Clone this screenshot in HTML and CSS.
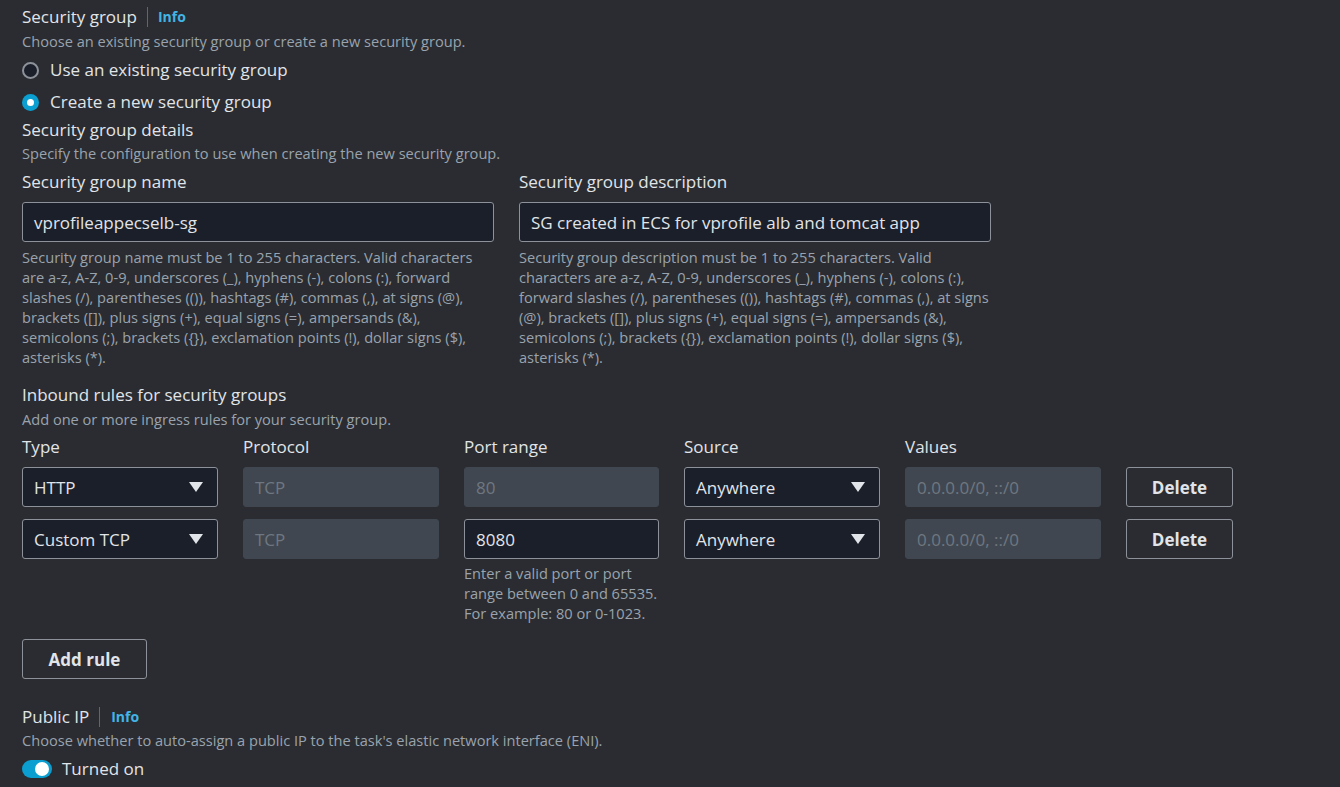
FILE: index.html
```html
<!DOCTYPE html>
<html>
<head>
<meta charset="utf-8">
<link rel="stylesheet" href="styles.css">
</head>
<body>
<div class="page">
  <div class="head"><span class="label">Security group</span><span class="sep"></span><span class="info">Info</span></div>
  <div class="desc">Choose an existing security group or create a new security group.</div>
  <div class="radios">
    <div class="radio"><span class="dot"></span><span class="rtext">Use an existing security group</span></div>
    <div class="radio"><span class="dot on"></span><span class="rtext">Create a new security group</span></div>
  </div>
  <div class="label sub">Security group details</div>
  <div class="desc d2">Specify the configuration to use when creating the new security group.</div>
  <div class="two">
    <div class="field">
      <div class="label">Security group name</div>
      <div class="input">vprofileappecselb-sg</div>
      <div class="help">Security group name must be 1 to 255 characters. Valid characters are a-z, A-Z, 0-9, underscores (_), hyphens (-), colons (:), forward slashes (/), parentheses (()), hashtags (#), commas (,), at signs (@), brackets ([]), plus signs (+), equal signs (=), ampersands (&amp;), semicolons (;), brackets ({}), exclamation points (!), dollar signs ($), asterisks (*).</div>
    </div>
    <div class="field">
      <div class="label">Security group description</div>
      <div class="input">SG created in ECS for vprofile alb and tomcat app</div>
      <div class="help">Security group description must be 1 to 255 characters. Valid characters are a-z, A-Z, 0-9, underscores (_), hyphens (-), colons (:), forward slashes (/), parentheses (()), hashtags (#), commas (,), at signs (@), brackets ([]), plus signs (+), equal signs (=), ampersands (&amp;), semicolons (;), brackets ({}), exclamation points (!), dollar signs ($), asterisks (*).</div>
    </div>
  </div>
  <div class="label inb">Inbound rules for security groups</div>
  <div class="desc">Add one or more ingress rules for your security group.</div>
  <div class="rules">
    <div class="label">Type</div>
    <div class="label">Protocol</div>
    <div class="label">Port range</div>
    <div class="label">Source</div>
    <div class="label">Values</div>
    <div></div>

    <div class="input select">HTTP<span class="tri"></span></div>
    <div class="input dis">TCP</div>
    <div class="input dis">80</div>
    <div class="input select">Anywhere<span class="tri"></span></div>
    <div class="input dis">0.0.0.0/0, ::/0</div>
    <div class="btn">Delete</div>

    <div class="input select">Custom TCP<span class="tri"></span></div>
    <div class="input dis">TCP</div>
    <div class="portcell">
      <div class="input">8080</div>
      <div class="help">Enter a valid port or port range between 0 and 65535. For example: 80 or 0-1023.</div>
    </div>
    <div class="input select">Anywhere<span class="tri"></span></div>
    <div class="input dis">0.0.0.0/0, ::/0</div>
    <div class="btn">Delete</div>
  </div>
  <div class="btn add">Add rule</div>
  <div class="head pip"><span class="label">Public IP</span><span class="sep"></span><span class="info">Info</span></div>
  <div class="desc d2">Choose whether to auto-assign a public IP to the task's elastic network interface (ENI).</div>
  <div class="toggle-row"><span class="toggle"><span class="knob"></span></span><span class="rtext">Turned on</span></div>
</div>
</body>
</html>
```
FILE: styles.css
```css
* { box-sizing: border-box; }
html, body { margin: 0; padding: 0; background: #2a2c31; }
body {
  font-family: "Open Sans", "Noto Sans", sans-serif;
  color: #e1e4e8;
  width: 1340px;
  height: 787px;
  overflow: hidden;
}
.page {
  padding: 6px 0 0 22px;
  display: flex;
  flex-direction: column;
  align-items: flex-start;
}
.head { display: flex; align-items: center; height: 22px; }
.label { font-size: 17px; line-height: 22px; color: #e1e4e8; }
.sep { width: 1px; height: 20px; background: #5f6670; margin: 0 10px; }
.info { font-size: 14px; font-weight: 700; color: #42b4e6; line-height: 22px; }
.desc { font-size: 14.6px; line-height: 20px; color: #9aa3ad; margin-top: 3px; }
.radios { display: flex; flex-direction: column; gap: 8px; margin-top: 7px; }
.radio { display: flex; align-items: center; height: 24px; }
.dot {
  width: 17px; height: 17px; border-radius: 50%;
  border: 2px solid #8d9199; background: #1a1f29;
  margin-right: 11px; position: relative;
}
.dot.on { border: none; background: #0a9fd0; }
.dot.on::after {
  content: ""; position: absolute; left: 5px; top: 5px;
  width: 7px; height: 7px; border-radius: 50%; background: #fff;
}
.rtext { font-size: 17px; line-height: 22px; color: #e1e4e8; }
.sub { margin-top: 5px; }
.d2 { margin-top: 2px; }
.two { display: grid; grid-template-columns: 472px 472px; column-gap: 25px; margin-top: 8px; }
.field { display: flex; flex-direction: column; }
.input {
  height: 40px; border: 1px solid #8d9199; border-radius: 3px;
  background: #1a1f29; color: #e1e4e8;
  font-size: 17px; display: flex; align-items: center; padding: 0 11px;
  white-space: nowrap;
}
.field .input { margin-top: 9px; }
.help { font-size: 14.6px; line-height: 20px; color: #9aa3ad; margin-top: 5px; }
.inb { margin-top: 17px; }
.rules {
  display: grid;
  grid-template-columns: 196px 196px 195px 196px 196px 107px;
  column-gap: 25px;
  row-gap: 12px;
  margin-top: 7px;
  align-items: start;
}
.rules > .label { margin-bottom: -3px; }
.select { justify-content: space-between; }
.tri {
  width: 0; height: 0;
  border-left: 7px solid transparent; border-right: 7px solid transparent;
  border-top: 10px solid #e1e4e8;
  margin-right: 3px;
}
.dis { background: #414750; border-color: #414750; color: #6e7781; }
.portcell { display: flex; flex-direction: column; }
.portcell .help { margin-top: 4px; }
.btn {
  height: 40px; border: 1px solid #8d9199; border-radius: 3px;
  display: flex; align-items: center; justify-content: center;
  font-size: 17px; font-weight: 700; color: #e1e4e8;
}
.add { width: 125px; margin-top: 16px; }
.pip { margin-top: 27px; }
.pip .sep { margin-right: 11px; }
.toggle-row { display: flex; align-items: center; height: 20px; margin-top: 9px; }
.toggle {
  width: 30px; height: 18px; border-radius: 9px; background: #0a9fd0;
  position: relative; margin-right: 10px;
}
.knob {
  position: absolute; right: 3px; top: 2px; width: 14px; height: 14px;
  border-radius: 50%; background: #fff;
}
```
